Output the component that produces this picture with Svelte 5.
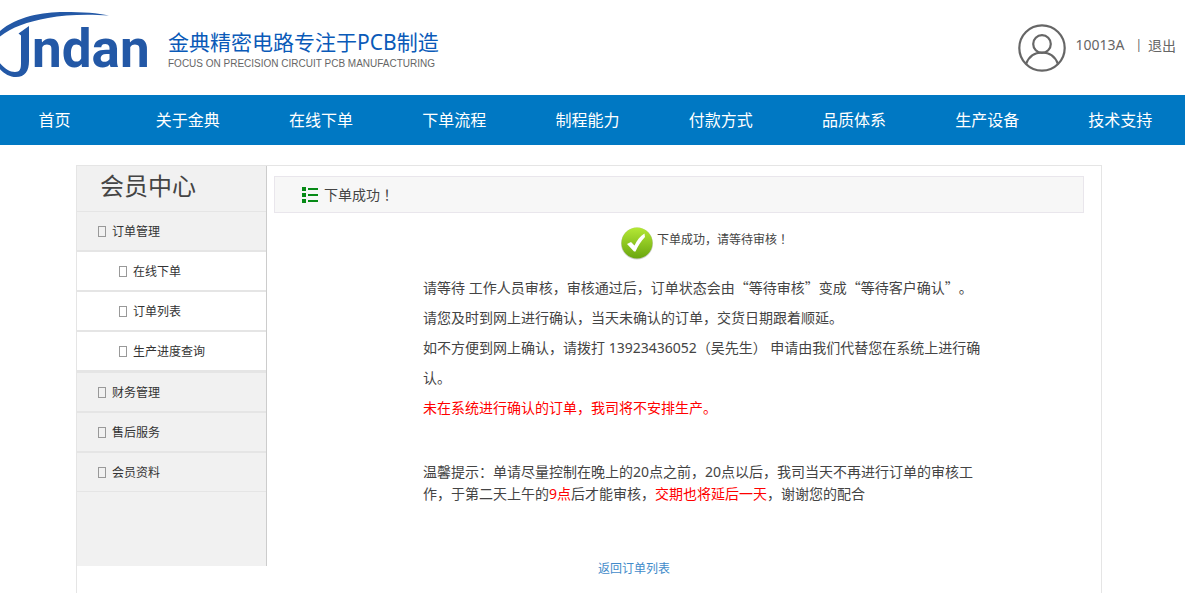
<script>
  const navItems = ['首页', '关于金典', '在线下单', '下单流程', '制程能力', '付款方式', '品质体系', '生产设备', '技术支持'];

  const menu = [
    { name: '订单管理', children: ['在线下单', '订单列表', '生产进度查询'] },
    { name: '财务管理', children: [] },
    { name: '售后服务', children: [] },
    { name: '会员资料', children: [] }
  ];

  let user = '10013A';
</script>

<div class="page">
  <header>
    <a class="logo" href="#home" aria-label="Jindan">
      <svg width="156" height="80" viewBox="0 0 156 80">
        <path d="M-2 33 C14 17 42 12 64 12 C83 12 98 13 109 15.500 C84 14 65 15 48 18 C26 22 10 28 -2 38 Z" />
        <path d="M29 26 L29 61 C29 71 25 77 16 77 C9 77 3 73 -2 67 L-2 61 C4 68 9 72 15 72 C20 72 21 69 21 63 L21 35.500 L18.500 33.500 Z" />
        <text x="32" y="67">ndan</text>
      </svg>
    </a>
    <div class="slogan">
      <strong>金典精密电路专注于PCB制造</strong>
      <small>FOCUS ON PRECISION CIRCUIT PCB MANUFACTURING</small>
    </div>
    <div class="user">
      <svg width="48" height="48" viewBox="0 0 48 48" fill="none" stroke="#666" stroke-width="2.200">
        <circle cx="24" cy="24" r="22.700" />
        <circle cx="24" cy="20" r="8.800" />
        <path d="M8 40 C11 32 17 28.500 24 28.500 C31 28.500 37 32 40 40" />
      </svg>
      <div class="links">
        <a class="name" href="#user">{user}</a>
        <span class="sep">|</span>
        <a href="#logout">退出</a>
      </div>
    </div>
  </header>

  <nav>
    <ul>
      {#each navItems as item}
        <li><a href="#nav">{item}</a></li>
      {/each}
    </ul>
  </nav>

  <div class="box">
    <aside>
      <h2>会员中心</h2>
      {#each menu as group}
        <a class="item" href="#menu"><i></i>{group.name}</a>
        {#if group.children.length}
          <div class="sub">
            {#each group.children as child}
              <a class="item" href="#menu"><i></i>{child}</a>
            {/each}
          </div>
        {/if}
      {/each}
    </aside>

    <main>
      <h3>
        <svg width="16" height="16" viewBox="0 0 16 16" fill="#078a17">
          <path d="M0 0h4v4H0zM0 6h4v4H0zM0 12h4v4H0zM6 1h10v2H6zM6 7h10v2H6zM6 13h10v2H6z" />
        </svg>
        <span>下单成功<span class="mid">！</span></span>
      </h3>

      <div class="result">
        <svg width="34" height="34" viewBox="0 0 34 34">
          <defs>
            <linearGradient id="green" x1="0" y1="0" x2="0" y2="1">
              <stop offset="0" stop-color="#b4e835" />
              <stop offset="1" stop-color="#6aa60f" />
            </linearGradient>
          </defs>
          <circle cx="17" cy="17.500" r="16" fill="#ccc" />
          <circle cx="17" cy="17" r="15.500" fill="url(#green)" />
          <path d="M7 18 L11 16 L14.500 19.500 C17 14 20 10 24.500 7.500 L25 11 C21 15 18 20 15.500 25.500 L14 25.500 Z" fill="#fff" />
        </svg>
        <span>下单成功，请等待审核<span class="mid">！</span></span>
      </div>

      <div class="text">
        <p>请等待 工作人员审核，审核通过后，订单状态会由<span class="cn">“</span>等待审核<span class="cn">”</span>变成<span class="cn">“</span>等待客户确认<span class="cn">”</span>。</p>
        <p>请您及时到网上进行确认，当天未确认的订单，交货日期跟着顺延。</p>
        <p>如不方便到网上确认，请拨打 13923436052（吴先生） 申请由我们代替您在系统上进行确认。</p>
        <p class="red">未在系统进行确认的订单，我司将不安排生产。</p>
        <p class="tip">
          温馨提示：单请尽量控制在晚上的20点之前，20点以后，我司当天不再进行订单的审核工作，于第二天上午的<span class="red">9点</span>后才能审核，<span class="red">交期也将延后一天</span>，谢谢您的配合
        </p>
      </div>

      <a class="back" href="#orders">返回订单列表</a>
    </main>
  </div>
</div>

<style>
  :global(body) {
    margin: 0;
    background: #fff;
  }
  .page {
    display: flex;
    flex-direction: column;
    min-height: 100vh;
    overflow: hidden;
    font-family: "Noto Sans", "Noto Sans CJK SC", sans-serif;
    font-size: 14px;
    color: #444;
    text-spacing-trim: space-all;
  }
  a {
    color: inherit;
    text-decoration: none;
  }
  svg {
    display: block;
    flex: none;
  }

  header {
    display: flex;
    align-items: center;
    height: 95px;
  }
  .logo {
    align-self: flex-start;
    margin-right: 12px;
  }
  .logo path,
  .logo text {
    fill: #2358a6;
  }
  .logo text {
    font: bold 53px Roboto, sans-serif;
  }
  .slogan {
    display: flex;
    flex-direction: column;
    flex: 1;
    padding-top: 4px;
    white-space: nowrap;
  }
  .slogan strong {
    font-size: 21px;
    font-weight: normal;
    line-height: 28px;
    color: #0a5ab8;
  }
  .slogan small {
    font: 10px/16px "Liberation Sans", sans-serif;
    color: #666;
  }
  .user {
    display: flex;
    align-items: center;
    margin-right: 9px;
    color: #666;
  }
  .links {
    display: flex;
    align-items: center;
    padding-bottom: 6px;
  }
  .name {
    margin: 0 11px 0 9px;
  }
  .sep {
    margin-right: 6px;
    font-size: 12px;
  }

  nav {
    background: #0078c3;
  }
  nav ul {
    display: flex;
    margin: 0 -2px 0 -12px;
    padding: 0;
    list-style: none;
  }
  nav li {
    flex: 1;
    text-align: center;
  }
  nav a {
    display: block;
    font-size: 16px;
    line-height: 50px;
    color: #fff;
  }

  .box {
    display: flex;
    flex: 1;
    align-items: flex-start;
    margin: 20px 83px 0 76px;
    border: 1px solid #e5e5e5;
    border-bottom: 0;
  }
  aside {
    box-sizing: border-box;
    flex: none;
    width: 190px;
    min-height: 400px;
    border-right: 1px solid #ccc;
    background: #f1f1f1;
  }
  h2 {
    margin: 0;
    padding: 0 0 5px 23px;
    font-size: 24px;
    font-weight: normal;
    line-height: 40px;
  }
  .item {
    display: flex;
    align-items: center;
    box-sizing: border-box;
    height: 40px;
    padding-left: 21px;
    border-top: 1px solid #e5e5e5;
    border-bottom: 1px solid #e5e5e5;
    font-size: 12px;
    color: #333;
  }
  .item i {
    box-sizing: border-box;
    width: 8px;
    height: 11px;
    margin-right: 6px;
    border: 1px solid #999;
  }
  .sub {
    border-bottom: 1px solid #e5e5e5;
    background: #fff;
  }
  .sub .item {
    padding-left: 42px;
  }

  main {
    flex: 1;
    min-width: 0;
    padding: 10px 17px 10px 7px;
  }
  h3 {
    display: flex;
    align-items: center;
    gap: 6px;
    margin: 0;
    padding-left: 27px;
    border: 1px solid #e9e6ec;
    background: #f7f7f7;
    font-size: 14px;
    font-weight: normal;
    line-height: 35px;
  }
  .result {
    display: flex;
    gap: 3px;
    margin: 13px 0 0 346px;
    font-size: 12px;
    line-height: 26px;
  }
  .text {
    max-width: 566px;
    margin: 12px 0 0 149px;
  }
  p {
    margin: 0;
    line-height: 30px;
  }
  .tip {
    margin-top: 38px;
    line-height: 22px;
  }
  .cn {
    font-family: "Noto Sans CJK SC", sans-serif;
  }
  /* full-width mark centred in its cell */
  .mid {
    font-family: "Noto Sans CJK TC", sans-serif;
  }
  .red {
    color: #f00;
  }
  .back {
    display: block;
    width: max-content;
    margin: 53px 0 0 324px;
    font-size: 12px;
    line-height: 22px;
    color: #428bca;
  }
</style>
